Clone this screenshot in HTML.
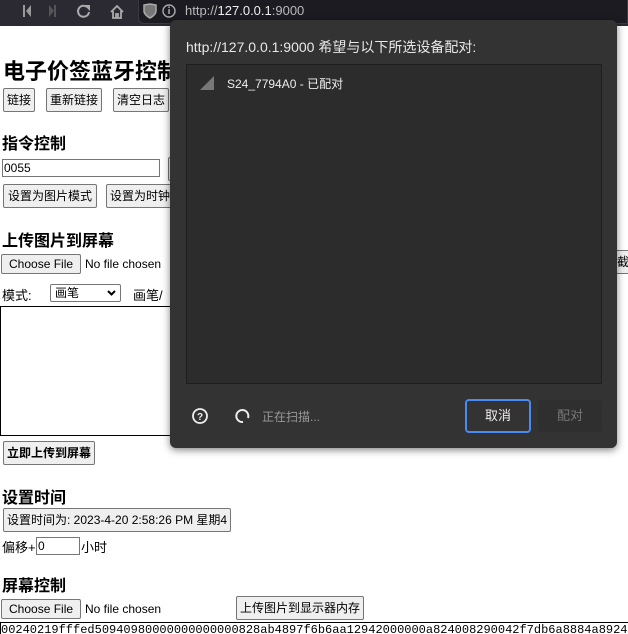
<!DOCTYPE html>
<html><head><meta charset="utf-8"><style>
*{box-sizing:border-box}
body{margin:0;width:628px;height:633px;overflow:hidden;background:#fff;font-family:"Liberation Sans","Noto Sans CJK SC",sans-serif;position:relative;color:#000}
.abs{position:absolute}
.tb{left:0;top:0;width:628px;height:26px;background:#2b2a33}
.url{left:138px;top:0;width:490px;height:24px;background:#1c1b22;border-radius:0 0 0 6px;border:1px solid #3a3944;border-top:none}
.btn{position:absolute;background:#efefef;border:1px solid #767676;border-radius:2px;font-size:12px;line-height:22px;padding:0 3px;white-space:nowrap;height:24px}
h{position:absolute;font-weight:bold;white-space:nowrap}
.t{position:absolute;font-size:12px;white-space:nowrap}
.dlg{left:170px;top:20px;width:447px;height:428px;background:#333334;border-radius:6px;box-shadow:0 2px 8px rgba(0,0,0,.5);color:#ddd;font-family:"Liberation Sans","Noto Sans CJK SC",sans-serif}
</style></head><body>
<div class="abs tb"></div>
<div class="abs url"></div>
<svg class="abs" style="left:0;top:0" width="180" height="26">
<g fill="#999"><rect x="23" y="5" width="2" height="12"/><path d="M31 5 L26 11 L31 17Z"/></g>
<g fill="#555"><rect x="54" y="5" width="2" height="12"/><path d="M49 5 L54 11 L49 17Z"/></g>
<path d="M87 7 A5.5 5.5 0 1 0 89 12" stroke="#aaa" stroke-width="2" fill="none"/><path d="M84 5 L90 5 L90 11Z" fill="#aaa"/>
<path d="M111 12 L117 6 L123 12 M113 11 V18 H121 V11 M116 18 V14 H118 V18" stroke="#aaa" stroke-width="1.8" fill="none"/>
<path d="M144 5 L150 4 L156 5 V11 C156 15 150 18 150 18 C150 18 144 15 144 11Z" stroke="#aaa" stroke-width="1.5" fill="#777"/>
<circle cx="169" cy="11" r="6" stroke="#aaa" stroke-width="1.4" fill="none"/><rect x="168.3" y="9" width="1.5" height="5" fill="#aaa"/><rect x="168.3" y="6.5" width="1.5" height="1.5" fill="#aaa"/>
</svg>
<div class="t" style="left:185px;top:3px;font-size:13px;color:#bbb">http://<span style="color:#eee">127.0.0.1</span>:9000</div>

<h style="left:3px;top:54px;font-size:22px">电子价签蓝牙控制</h>
<div class="btn" style="left:3px;top:88px">链接</div>
<div class="btn" style="left:46px;top:88px">重新链接</div>
<div class="btn" style="left:113px;top:88px">清空日志</div>
<h style="left:2px;top:130px;font-size:16px">指令控制</h>
<div class="abs" style="left:2px;top:159px;width:158px;height:18px;border:1px solid #767676;font-size:12px;padding:1px 1px;line-height:14px">0055</div>
<div class="btn" style="left:168px;top:157px;width:10px"></div>
<div class="btn" style="left:3px;top:184px;padding:0 4px">设置为图片模式</div>
<div class="btn" style="left:106px;top:184px">设置为时钟</div>
<h style="left:2px;top:227px;font-size:16px">上传图片到屏幕</h>
<div class="btn" style="left:1px;top:254px;height:20px;line-height:18px;padding:0 7px">Choose File</div>
<div class="t" style="left:85px;top:257px">No file chosen</div>
<div class="t" style="left:2px;top:285px;font-size:13px">模式:</div>
<div class="abs" style="left:50px;top:284px;width:71px;height:18px;border:1px solid #767676;border-radius:2px;font-size:12px;padding-left:4px;line-height:16px">画笔<svg style="position:absolute;right:4px;top:5px" width="9" height="6"><path d="M1 1 L4.5 4.5 L8 1" stroke="#000" stroke-width="2" fill="none"/></svg></div>
<div class="t" style="left:133px;top:285px;font-size:13px">画笔/</div>
<div class="abs" style="left:0;top:306px;width:200px;height:130px;border:1px solid #000;border-right:none"></div>
<div class="btn" style="left:3px;top:441px;font-weight:bold">立即上传到屏幕</div>
<h style="left:2px;top:484px;font-size:16px">设置时间</h>
<div class="btn" style="left:3px;top:508px">设置时间为: 2023-4-20 2:58:26 PM 星期4</div>
<div class="t" style="left:2px;top:537px;font-size:13px">偏移+</div>
<div class="abs" style="left:36px;top:537px;width:44px;height:18px;border:1px solid #767676;font-size:12px;line-height:16px;padding-left:1px">0</div>
<div class="t" style="left:81px;top:537px;font-size:13px">小时</div>
<h style="left:2px;top:572px;font-size:16px">屏幕控制</h>
<div class="btn" style="left:1px;top:599px;height:20px;line-height:18px;padding:0 7px">Choose File</div>
<div class="t" style="left:85px;top:602px">No file chosen</div>
<div class="btn" style="left:236px;top:596px">上传图片到显示器内存</div>
<div class="abs" style="left:0;top:622px;width:628px;height:12px;border-top:1px solid #000;border-left:1px solid #000;font-family:'Liberation Mono',monospace;font-size:12px;line-height:14px;white-space:nowrap;overflow:hidden">00240219fffed50940980000000000000828ab4897f6b6aa12942000000a824008290042f7db6a8884a8924</div>
<div class="btn" style="left:614px;top:250px;width:20px;padding:0 2px">截</div>

<div class="abs dlg">
<div class="t" style="left:16px;top:17px;font-size:14px;color:#e8e8e8">http://127.0.0.1:9000 希望与以下所选设备配对:</div>
<div class="abs" style="left:16px;top:44px;width:416px;height:320px;background:#2c2c2c;border:1px solid #1e1e1e"></div>
<svg class="abs" style="left:30px;top:56px" width="14" height="14"><path d="M14 0 V14 H0Z" fill="#777"/></svg>
<div class="t" style="left:57px;top:55px;font-size:12px;color:#eee">S24_7794A0 - 已配对</div>
<svg class="abs" style="left:21px;top:386px" width="60" height="20"><circle cx="9" cy="10" r="7" stroke="#eee" stroke-width="1.8" fill="none"/><text x="9" y="14" font-size="10" font-weight="bold" fill="#eee" text-anchor="middle" font-family="Liberation Sans">?</text><path d="M52 16 A6 6 0 1 1 57 12" stroke="#eee" stroke-width="2" fill="none"/></svg>
<div class="t" style="left:92px;top:388px;font-size:12px;color:#999">正在扫描...</div>
<div class="abs" style="left:295px;top:379px;width:66px;height:34px;border:2px solid #4a8af4;border-radius:4px;color:#eee;font-size:13px;text-align:center;line-height:30px">取消</div>
<div class="abs" style="left:368px;top:380px;width:64px;height:32px;background:#2f2f2f;border-radius:4px;color:#777;font-size:13px;text-align:center;line-height:32px">配对</div>
</div>
</body></html>
